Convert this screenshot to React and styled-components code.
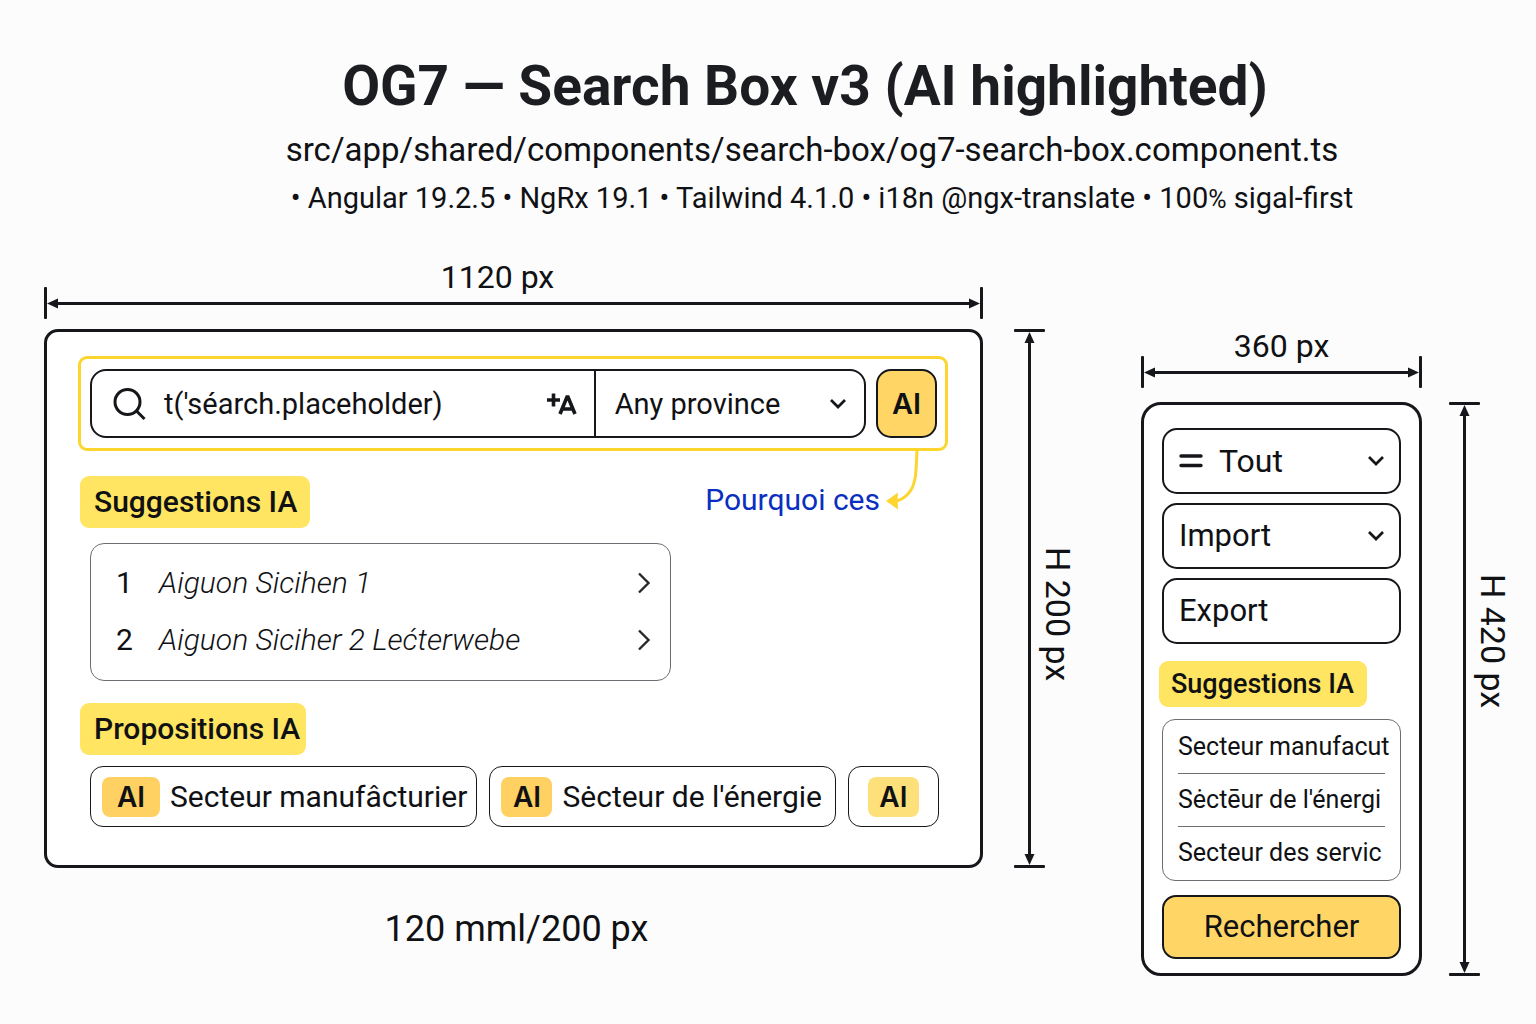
import React from "react";
import styled, { createGlobalStyle } from "styled-components";

const ink = "#15171b";
const gold = "#ffd566";
const lemon = "#ffe561";
const inter = `Inter, "Liberation Sans", sans-serif`;
const roboto = `Roboto, "Liberation Sans", sans-serif`;

const GlobalStyle = createGlobalStyle`
  *, *::before, *::after { box-sizing: border-box; }
  body { margin: 0; background: #fcfcfc; color: #101114; font-family: ${roboto}; }
  h1, h2, p, ol, ul { margin: 0; padding: 0; font-weight: 400; }
  ol, ul { list-style: none; }
  button, input, select { font: inherit; color: inherit; margin: 0; }
  svg { display: block; flex: none; }
`;

const Page = styled.main`
  padding: 56px 30px 48px 44px;
`;

const Header = styled.header`
  padding-left: 60px;
  text-align: center;
`;

const Title = styled.h1`
  font: 700 55px/60px ${roboto};
  color: #1b1d21;
`;

const Path = styled.p`
  margin-top: 14px;
  padding-left: 14px;
  font-size: 33px;
  line-height: 40px;
`;

const Stack = styled.p`
  margin-top: 10px;
  padding-left: 34px;
  font-size: 29px;
  line-height: 36px;
  small { font-size: 25px; }
`;

const Board = styled.div`
  display: flex;
  align-items: flex-start;
  gap: 70px;
  margin-top: 45px;
`;

const Figure = styled.section`
  display: grid;
  grid-template-columns: minmax(0, 1fr) 57px;
  grid-template-rows: 24px 32px auto auto;
  column-gap: ${(p) => (p.$narrow ? 27 : 31)}px;
  flex: ${(p) => (p.$narrow ? "0 0 365px" : "1 1 0")};
  margin-top: ${(p) => (p.$narrow ? 69 : 0)}px;
  min-width: 0;
`;

const WidthLabel = styled.p`
  grid-column: 1;
  padding-right: ${(p) => (p.$narrow ? 0 : 32)}px;
  font: 400 32px/28px ${roboto};
  text-align: center;
`;

const Ruler = styled.div`
  grid-column: 1;
  display: flex;
  align-items: center;
`;

const Tick = styled.span`
  flex: none;
  width: ${(p) => (p.$flat ? 31 : 3)}px;
  height: ${(p) => (p.$flat ? 3 : 32)}px;
  border-radius: 1px;
  background: ${ink};
`;

const Line = styled.span`
  flex: 1;
  ${(p) => (p.$vertical ? "width: 3px;" : "height: 3px;")}
  background: ${ink};
`;

const Side = styled.div`
  grid-column: 2;
  grid-row: 3;
  display: grid;
  grid-template-columns: 31px 26px;
  margin-top: ${(p) => (p.$narrow ? 14 : 10)}px;
`;

const SideRuler = styled.div`
  display: flex;
  flex-direction: column;
  align-items: center;
`;

const HeightLabel = styled.p`
  writing-mode: vertical-rl;
  padding-top: ${(p) => (p.$narrow ? 172 : 218)}px;
  font: 400 34px/26px ${roboto};
`;

const Panel = styled.div`
  grid-column: 1;
  grid-row: 3;
  min-width: 0;
  margin-top: ${(p) => (p.$narrow ? 14 : 10)}px;
  padding: ${(p) => (p.$narrow ? "23px 15px 14px" : "24px 32px 38px 31px")};
  border: 3px solid ${ink};
  border-radius: ${(p) => (p.$narrow ? 20 : 14)}px;
  background: #fff;
`;

const Caption = styled.p`
  grid-column: 1;
  margin-top: 41px;
  padding-left: 6px;
  font: 400 36px/40px ${roboto};
  text-align: center;
`;

const SearchFrame = styled.form`
  display: flex;
  gap: 10px;
  padding: 10px 8px 10px 9px;
  border: 3px solid #fcd62f;
  border-radius: 9px;
`;

const SearchField = styled.div`
  flex: 1;
  min-width: 0;
  display: grid;
  grid-template-columns: minmax(0, 505fr) minmax(0, 269fr);
  height: 69px;
  border: 2px solid ${ink};
  border-radius: 16px;
`;

const QueryPart = styled.label`
  display: flex;
  align-items: center;
  padding: 0 16px 0 20px;
  border-right: 2px solid ${ink};
`;

const QueryInput = styled.input`
  flex: 1;
  min-width: 0;
  padding: 0;
  margin-left: 16px;
  border: 0;
  outline: 0;
  background: transparent;
  font: 400 29px/36px ${roboto};
`;

const SelectBox = styled.label`
  display: grid;
  align-items: center;
  min-width: 0;
  ${(p) =>
    p.$boxed &&
    `height: 66px; border: 2px solid ${ink}; border-radius: 15px;`}
  > * { grid-area: 1 / 1; }
  > svg { justify-self: end; margin-right: ${(p) => (p.$boxed ? 14 : 17)}px; pointer-events: none; }
  > svg.lead { justify-self: start; margin-left: 15px; }
`;

const Select = styled.select`
  appearance: none;
  width: 100%;
  height: 100%;
  padding: 0 48px 0 ${(p) => p.$inset}px;
  border: 0;
  outline: 0;
  background: transparent;
  font: 400 ${(p) => p.$size}px/36px ${roboto};
`;

const AiButton = styled.button`
  flex: none;
  width: 61px;
  padding: 0;
  border: 2px solid ${ink};
  border-radius: 15px;
  background: ${gold};
  font: 600 29px/36px ${inter};
`;

const HintRow = styled.div`
  display: flex;
  justify-content: space-between;
  align-items: flex-end;
  height: 77px;
  padding: 0 29px 0 2px;
`;

const Hint = styled.div`
  display: flex;
  align-items: flex-start;
  gap: 6px;
  height: 77px;
`;

const HintLink = styled.a`
  margin-top: 31px;
  font: 400 30px/36px ${roboto};
  color: #0a2fc0;
  text-decoration: none;
`;

const Badge = styled.h2`
  width: fit-content;
  padding: 0 ${(p) => (p.$tight ? 6 : 13)}px 0 ${(p) => (p.$small ? 12 : 14)}px;
  border-radius: 9px;
  background: ${lemon};
  font: 500 ${(p) => (p.$small ? "27px/46px" : "30px/52px")} ${roboto};
  white-space: nowrap;
`;

const SuggestionList = styled.ol`
  max-width: 581px;
  margin: 15px 0 22px 12px;
  padding: 10px 0 12px;
  border: 1px solid #6b6e73;
  border-radius: 14px;
`;

const SuggestionButton = styled.button`
  display: flex;
  align-items: center;
  width: 100%;
  height: 57px;
  padding: 0 19px 0 25px;
  border: 0;
  background: transparent;
  text-align: left;
  font: 400 30px/36px ${roboto};
  em { flex: 1; font-weight: 300; }
`;

const Rank = styled.span`
  width: 43px;
`;

const BadgeRow = styled.div`
  padding-left: 2px;
`;

const Chips = styled.div`
  display: grid;
  grid-template-columns: 387fr 346fr 91fr;
  gap: 12px;
  margin: 11px 9px 0 12px;
`;

const Chip = styled.button`
  display: flex;
  align-items: center;
  justify-content: ${(p) => (p.$center ? "center" : "flex-start")};
  gap: 10px;
  min-width: 0;
  height: 61px;
  padding: 0 11px;
  border: 1px solid ${ink};
  border-radius: 13px;
  background: #fff;
  font: 400 30px/36px ${roboto};
  white-space: nowrap;
`;

const Tag = styled.span`
  flex: none;
  width: ${(p) => (p.$wide ? 58 : 51)}px;
  border-radius: 8px;
  background: ${(p) => (p.$pale ? "#fee07a" : "#ffd062")};
  font: 600 28px/40px ${inter};
  text-align: center;
`;

const Fields = styled.div`
  display: grid;
  gap: 9px;
  padding: 0 3px;
  margin-bottom: 17px;
`;

const PlainField = styled.button`
  height: 66px;
  padding: 0 15px;
  border: 2px solid ${ink};
  border-radius: 15px;
  background: #fff;
  font: 400 31px/36px ${roboto};
  text-align: left;
`;

const SectorList = styled.ul`
  margin: 12px 3px 14px;
  padding: 1px 15px;
  border: 1px solid #6b6e73;
  border-radius: 13px;
`;

const Sector = styled.li`
  font: 400 25px/52px ${roboto};
  white-space: nowrap;
  & + & { border-top: 1px solid #6b6e73; }
`;

const Submit = styled.button`
  display: block;
  width: calc(100% - 6px);
  height: 64px;
  margin: 0 3px;
  border: 2px solid ${ink};
  border-radius: 14px;
  background: ${gold};
  font: 400 31px/36px ${roboto};
`;

const turns = { left: 0, up: 90, right: 180, down: 270 };

function Arrowhead({ to }) {
  return (
    <svg width="11" height="11" viewBox="0 0 11 11" aria-hidden="true">
      <path d="M0 5.5 11 .5v10z" fill={ink} transform={`rotate(${turns[to]} 5.5 5.5)`} />
    </svg>
  );
}

function Chevron() {
  return (
    <svg width="18" height="12" viewBox="0 0 18 12" fill="none" aria-hidden="true">
      <path d="m2 2 7 7 7-7" stroke={ink} strokeWidth="2.7" />
    </svg>
  );
}

function Next() {
  return (
    <svg width="14" height="22" viewBox="0 0 14 22" fill="none" aria-hidden="true">
      <path d="m2 1.5 9.5 9.5L2 20.5" stroke="#26282c" strokeWidth="2.4" />
    </svg>
  );
}

function Magnifier() {
  return (
    <svg width="36" height="36" viewBox="0 0 36 36" fill="none" stroke={ink} strokeWidth="3" aria-hidden="true">
      <circle cx="15.5" cy="16" r="12.5" />
      <path d="m24.5 25 8 8" />
    </svg>
  );
}

function Translate() {
  return (
    <svg width="32" height="24" viewBox="0 0 32 24" fill="none" stroke={ink} strokeWidth="3.6" aria-hidden="true">
      <path d="M1 8h13M7.5 1.5v13" />
      <path d="m14 22 7-17h1l7 17M16.500 17h10" />
    </svg>
  );
}

function Bars() {
  return (
    <svg className="lead" width="24" height="16" viewBox="0 0 24 16" aria-hidden="true">
      <path d="M2 3h20M2 12.5h20" stroke={ink} strokeWidth="3.4" strokeLinecap="round" />
    </svg>
  );
}

function CurvedArrow() {
  return (
    <svg width="33" height="60" viewBox="0 0 33 60" aria-hidden="true">
      <path d="M31 0C30 14 31 29 25 39q-5 8-14 11" fill="none" stroke="#fcd62f" strokeWidth="3" />
      <path d="M0 50 12 41.5l-.5 6 .5 11z" fill="#fcd62f" />
    </svg>
  );
}

function WidthRuler() {
  return (
    <Ruler aria-hidden="true">
      <Tick /><Arrowhead to="left" /><Line /><Arrowhead to="right" /><Tick />
    </Ruler>
  );
}

function HeightRuler({ narrow, children }) {
  return (
    <Side $narrow={narrow}>
      <SideRuler aria-hidden="true">
        <Tick $flat /><Arrowhead to="up" /><Line $vertical /><Arrowhead to="down" /><Tick $flat />
      </SideRuler>
      <HeightLabel $narrow={narrow}>{children}</HeightLabel>
    </Side>
  );
}

const suggestions = ["Aiguon Sicihen 1", "Aiguon Siciher 2 Lećterwebe"];
const sectors = ["Secteur manufacut", "Sėctēur de l'énergi", "Secteur des servic"];

export default function App() {
  return (
    <Page>
      <GlobalStyle />
      <Header>
        <Title>OG7 — Search Box v3 (AI highlighted)</Title>
        <Path>src/app/shared/components/search-box/og7-search-box.component.ts</Path>
        <Stack>
          • Angular 19.2.5 • NgRx 19.1 • Tailwind 4.1.0 • i18n @ngx-translate • 100<small>%</small> sigal-first
        </Stack>
      </Header>

      <Board>
        <Figure>
          <WidthLabel>1120 px</WidthLabel>
          <WidthRuler />
          <Panel>
            <SearchFrame onSubmit={(e) => e.preventDefault()}>
              <SearchField>
                <QueryPart>
                  <Magnifier />
                  <QueryInput aria-label="Search" defaultValue="t('séarch.placeholder)" />
                  <Translate />
                </QueryPart>
                <SelectBox>
                  <Select aria-label="Province" $inset={19} $size={29}>
                    <option>Any province</option>
                  </Select>
                  <Chevron />
                </SelectBox>
              </SearchField>
              <AiButton type="submit">AI</AiButton>
            </SearchFrame>

            <HintRow>
              <Badge>Suggestions IA</Badge>
              <Hint>
                <HintLink href="#why">Pourquoi ces</HintLink>
                <CurvedArrow />
              </Hint>
            </HintRow>
            <SuggestionList>
              {suggestions.map((text, i) => (
                <li key={text}>
                  <SuggestionButton>
                    <Rank>{i + 1}</Rank>
                    <em>{text}</em>
                    <Next />
                  </SuggestionButton>
                </li>
              ))}
            </SuggestionList>

            <BadgeRow>
              <Badge $tight>Propositions IA</Badge>
            </BadgeRow>
            <Chips>
              <Chip><Tag $wide>AI</Tag>Secteur manufâcturier</Chip>
              <Chip><Tag>AI</Tag>Sėcteur de l'énergie</Chip>
              <Chip $center><Tag $pale>AI</Tag></Chip>
            </Chips>
          </Panel>
          <HeightRuler>H 200 px</HeightRuler>
          <Caption>120 mml/200 px</Caption>
        </Figure>

        <Figure $narrow>
          <WidthLabel $narrow>360 px</WidthLabel>
          <WidthRuler />
          <Panel $narrow>
            <Fields>
              <SelectBox $boxed>
                <Select aria-label="Type" $inset={55} $size={32}>
                  <option>Tout</option>
                </Select>
                <Bars />
                <Chevron />
              </SelectBox>
              <SelectBox $boxed>
                <Select aria-label="Direction" $inset={15} $size={31}>
                  <option>Import</option>
                </Select>
                <Chevron />
              </SelectBox>
              <PlainField>Export</PlainField>
            </Fields>
            <Badge $small>Suggestions IA</Badge>
            <SectorList>
              {sectors.map((text) => (
                <Sector key={text}>{text}</Sector>
              ))}
            </SectorList>
            <Submit>Rechercher</Submit>
          </Panel>
          <HeightRuler narrow>H 420 px</HeightRuler>
        </Figure>
      </Board>
    </Page>
  );
}
